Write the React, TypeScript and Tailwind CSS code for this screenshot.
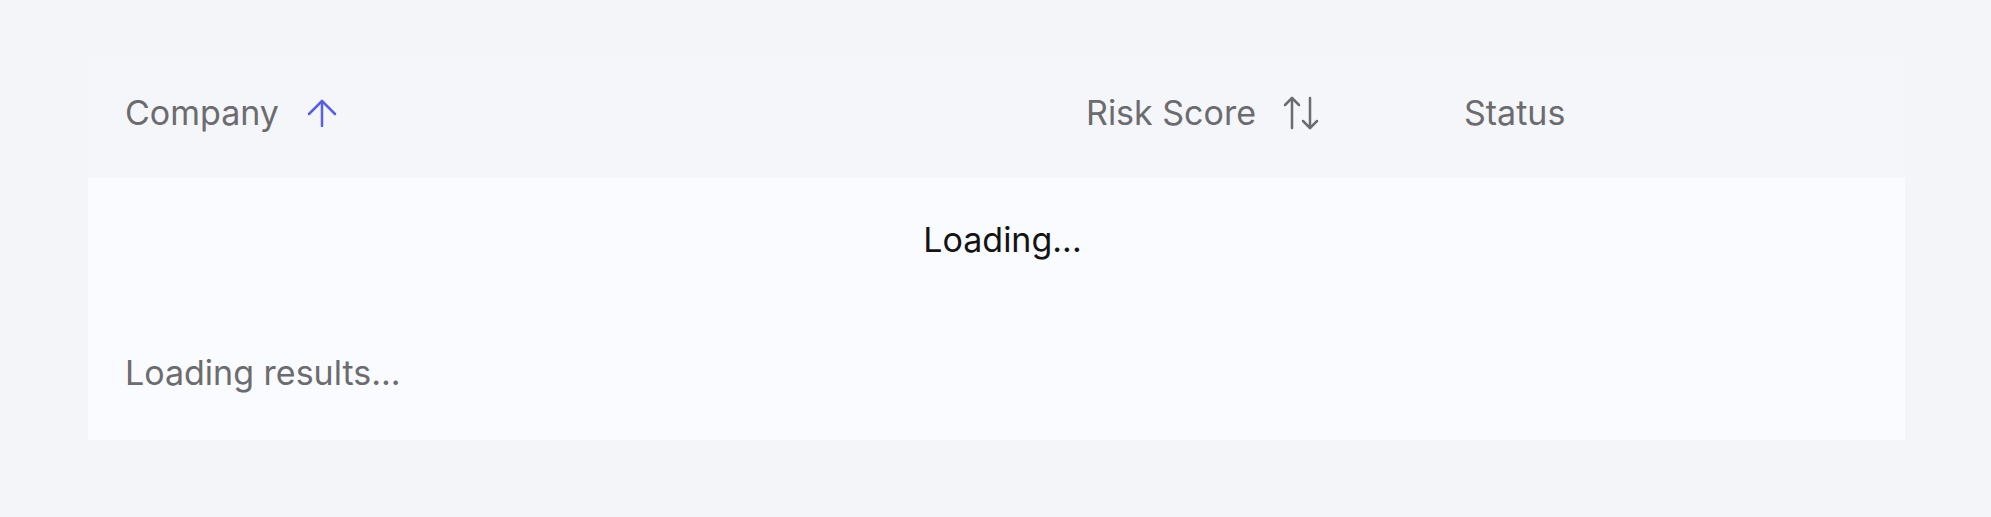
const ArrowUp = () => (
  <svg width="30" height="28" viewBox="0 0 30 28" fill="none" stroke="#5a5fe0" strokeWidth="2.5" strokeLinecap="round" strokeLinejoin="round">
    <path d="M15 2v25" />
    <path d="M2 15 15 2l13 13" />
  </svg>
);

const ArrowUpDown = () => (
  <svg width="36" height="34" viewBox="0 0 36 34" fill="none" stroke="#6b6b70" strokeWidth="2.5" strokeLinecap="round" strokeLinejoin="round">
    <path d="M9 2v30" />
    <path d="M2 9l7-7 7 7" />
    <path d="M27 2v30" />
    <path d="M20 25l7 7 7-7" />
  </svg>
);

export default function App() {
  return (
    <div
      className="min-h-screen bg-[#f4f5f9] pt-[57px] pl-[88px]"
      style={{ fontFamily: 'Inter, "Noto Sans", sans-serif' }}
    >
      <div className="w-[1817px]">
        <div className="flex h-[121px] items-start bg-[#f5f6fa] pt-[35px] text-[34px] leading-[41px] text-[#6b6b70]">
          <div className="flex w-[961px] items-center gap-[28px] pl-[37px]">
            <span>Company</span>
            <ArrowUp />
          </div>
          <div className="flex w-[378px] items-center gap-[27px] pl-[37px]">
            <span>Risk Score</span>
            <ArrowUpDown />
          </div>
          <div className="w-[478px] pl-[37px]">
            <span>Status</span>
          </div>
        </div>
        <div className="h-[122px] bg-[#fafbfe] pl-[12px] pt-[41px] text-center text-[34px] leading-[41px] text-[#141414]">
          Loading...
        </div>
        <div className="h-[140px] bg-[#fafbfe] pl-[37px] pt-[52px] text-[34px] leading-[41px] text-[#6b6b70]">
          Loading results...
        </div>
      </div>
    </div>
  );
}
